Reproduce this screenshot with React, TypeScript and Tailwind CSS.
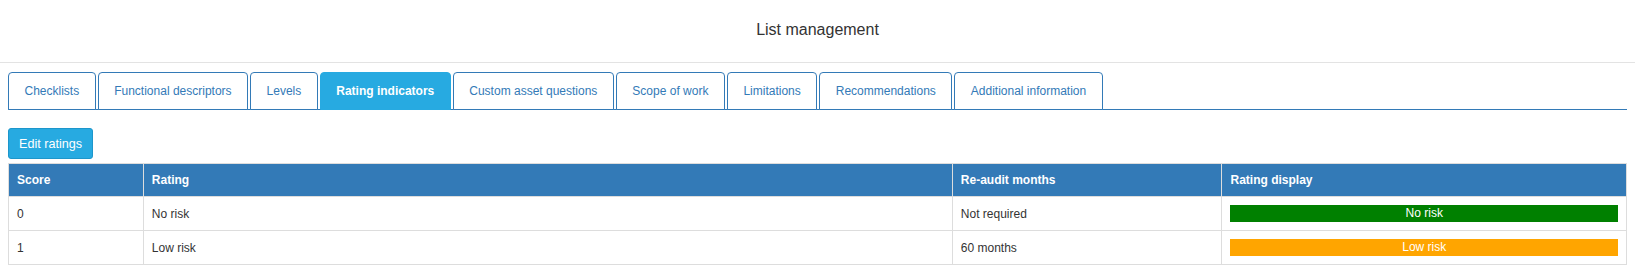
import React from 'react';

const TABS = [
  'Checklists',
  'Functional descriptors',
  'Levels',
  'Rating indicators',
  'Custom asset questions',
  'Scope of work',
  'Limitations',
  'Recommendations',
  'Additional information',
];

const ACTIVE_TAB = 'Rating indicators';

const RATINGS = [
  { score: 0, rating: 'No risk', months: 'Not required', color: 'bg-[#008000]' },
  { score: 1, rating: 'Low risk', months: '60 months', color: 'bg-[#ffa500]' },
];

export default function App() {
  return (
    <div className="min-h-screen bg-white text-[12px] text-[#333] [font-family:'Liberation_Sans',Arial,sans-serif]">
      {/* page title */}
      <div className="h-[63px] border-b border-[#e3e3e3] pt-[21px] text-center text-[16px] leading-[18px] text-[#333]">
        List management
      </div>

      <div className="px-2 pt-[9px]">
        {/* tabs */}
        <ul className="flex border-b border-[#337ab7]">
          {TABS.map((tab) => {
            const active = tab === ACTIVE_TAB;
            return (
              <li key={tab} className="-mb-px mr-[2px]">
                <a
                  href="#"
                  className={`flex h-[38px] items-center rounded-t-[4px] border px-[15.5px] text-[12px] leading-[17px] ${
                    active
                      ? 'border-[#27aae1] bg-[#27aae1] font-bold text-white'
                      : 'border-[#337ab7] bg-white text-[#337ab7]'
                  }`}
                >
                  {tab}
                </a>
              </li>
            );
          })}
        </ul>

        {/* actions */}
        <div className="pt-[18px] pb-[4px]">
          <button className="h-[31px] rounded-[3px] border border-[#1d96cb] bg-[#27aae1] px-[10px] text-[12.6px] leading-[18px] text-white">
            Edit ratings
          </button>
        </div>

        {/* ratings table */}
        <table className="w-full table-fixed border-collapse border border-[#ddd]">
          <thead>
            <tr className="bg-[#337ab7] text-left text-white">
              <th className="w-1/12 border border-[#ddd] px-2 py-2 font-bold leading-[16.3px]">Score</th>
              <th className="w-6/12 border border-[#ddd] px-2 py-2 font-bold leading-[16.3px]">Rating</th>
              <th className="w-2/12 border border-[#ddd] px-2 py-2 font-bold leading-[16.3px]">Re-audit months</th>
              <th className="w-3/12 border border-[#ddd] px-2 py-2 font-bold leading-[16.3px]">Rating display</th>
            </tr>
          </thead>
          <tbody>
            {RATINGS.map((r) => (
              <tr key={r.score}>
                <td className="border border-[#ddd] px-2 py-2 leading-[16.3px]">{r.score}</td>
                <td className="border border-[#ddd] px-2 py-2 leading-[16.3px]">{r.rating}</td>
                <td className="border border-[#ddd] px-2 py-2 leading-[16.3px]">{r.months}</td>
                <td className="border border-[#ddd] px-2 py-2 leading-[16.3px]">
                  <div className={`${r.color} h-[17px] text-center leading-[17px] text-white`}>{r.rating}</div>
                </td>
              </tr>
            ))}
          </tbody>
        </table>
      </div>
    </div>
  );
}
